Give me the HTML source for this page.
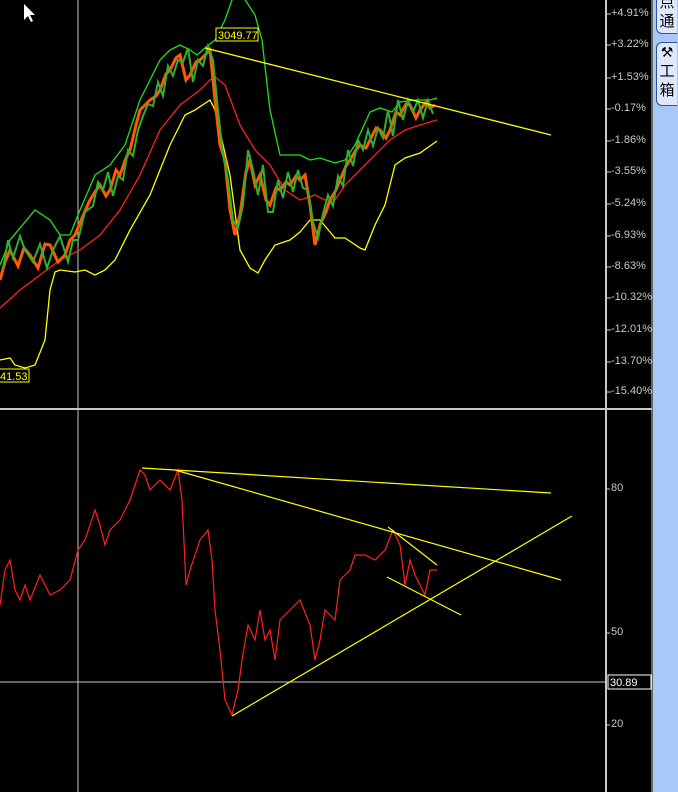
<!DOCTYPE html>
<html><head><meta charset="utf-8"><style>
body{margin:0;width:678px;height:792px;background:#000;overflow:hidden;font-family:"Liberation Sans","Noto Sans CJK SC",sans-serif}
.ax{position:absolute;color:#c8c8c8;font-size:11px;left:611px}
.tab{position:absolute;left:656px;width:20px;background:#dde8fc;border:1px solid #3050a0;border-right:none;border-radius:6px 0 0 6px;font-size:15px;line-height:19px;text-align:center;color:#000}
</style></head><body>
<svg width="678" height="792" style="position:absolute;left:0;top:0" xmlns="http://www.w3.org/2000/svg">
<rect x="653" y="0" width="25" height="792" fill="#a8c8f8"/>
<line x1="78" y1="0" x2="78" y2="792" stroke="#c8c8c8" stroke-width="1"/>
<line x1="0" y1="682" x2="606" y2="682" stroke="#c8c8c8" stroke-width="1"/>
<line x1="0" y1="409" x2="652" y2="409" stroke="#c8c8c8" stroke-width="2"/>
<line x1="606" y1="0" x2="606" y2="792" stroke="#c8c8c8" stroke-width="2"/>
<line x1="652" y1="0" x2="652" y2="792" stroke="#c8c8c8" stroke-width="1"/>
<g stroke="#c8c8c8">
<line x1="607" y1="14" x2="611" y2="14"/><line x1="607" y1="45" x2="611" y2="45"/><line x1="607" y1="78" x2="611" y2="78"/><line x1="607" y1="109" x2="611" y2="109"/><line x1="607" y1="141" x2="611" y2="141"/><line x1="607" y1="172" x2="611" y2="172"/><line x1="607" y1="204" x2="611" y2="204"/><line x1="607" y1="236" x2="611" y2="236"/><line x1="607" y1="267" x2="611" y2="267"/><line x1="607" y1="298" x2="611" y2="298"/><line x1="607" y1="330" x2="611" y2="330"/><line x1="607" y1="362" x2="611" y2="362"/><line x1="607" y1="392" x2="611" y2="392"/>
<line x1="607" y1="489" x2="610" y2="489"/><line x1="607" y1="633" x2="610" y2="633"/><line x1="607" y1="725" x2="610" y2="725"/>
</g>
<polyline fill="none" stroke="#ffff00" stroke-width="1.3" points="0,360 10,358 15,365 25,368 35,365 45,340 50,290 55,272 60,270 75,272 85,270 95,275 105,270 115,260 130,230 150,195 170,145 185,115 195,110 210,100 215,110 230,175 240,250 250,268 258,273 265,260 275,245 290,240 300,232 310,220 320,220 335,238 345,238 360,248 365,250 375,225 385,205 395,165 405,158 420,153 437,141"/>
<polyline fill="none" stroke="#ff2020" stroke-width="1.3" points="0,308 20,290 40,275 60,260 80,250 100,235 120,210 140,175 160,130 180,105 200,90 210,80 215,77 225,85 240,125 255,150 270,165 285,190 300,200 315,195 325,200 335,200 345,185 360,170 375,155 390,140 405,130 420,125 437,120"/>
<polyline fill="none" stroke="#20e020" stroke-width="1.3" points="0,265 10,240 35,210 50,220 60,235 70,235 80,210 95,175 110,165 125,145 140,100 150,80 160,60 170,50 180,45 190,50 197,55 205,48 215,40 225,20 232,0 240,-8 255,15 262,40 270,110 280,155 290,155 300,155 310,160 320,158 335,163 345,160 355,145 370,112 380,108 392,112 400,102 415,100 430,100 437,98"/>
<polyline fill="none" stroke="#ff5a00" stroke-width="3" points="0,280 5,262 10,250 18,266 24,248 30,255 38,268 45,244 50,245 58,262 65,255 70,240 75,235 82,218 90,200 95,192 100,185 106,196 110,190 116,170 120,175 126,158 130,150 136,125 140,110 146,104 150,100 156,96 160,90 166,74 170,70 176,58 180,55 186,80 190,75 196,62 200,60 206,54 210,50 215,100 220,145 225,160 230,210 235,235 240,215 246,172 250,160 255,185 260,175 266,200 270,205 276,188 280,190 286,182 290,185 296,176 300,180 305,175 310,205 315,245 320,225 326,212 330,200 336,190 340,180 346,166 350,160 356,150 360,145 366,148 370,140 376,128 380,130 386,138 390,130 396,112 400,115 406,104 410,105 416,118 420,110 426,102 430,108 435,105"/>
<polyline fill="none" stroke="#30b030" stroke-width="2" points="3,270 8,240 13,258 20,236 25,250 33,262 40,244 47,268 53,250 60,236 68,262 73,240 78,240 85,212 93,206 98,182 103,190 108,172 113,196 118,176 123,180 128,150 133,156 138,130 143,116 148,104 153,106 158,82 163,96 168,66 173,76 178,60 183,62 188,48 193,82 198,60 203,66 208,46 213,60 218,110 223,155 228,180 233,220 238,228 243,205 248,150 253,170 258,195 263,165 268,212 273,212 278,180 283,198 288,172 293,192 298,170 303,188 308,190 313,222 318,238 323,214 328,195 333,206 338,176 343,186 348,150 353,166 358,140 363,150 368,130 373,146 378,128 383,138 388,110 393,136 398,100 403,120 408,100 413,112 418,100 423,118 428,100 433,114"/>
<line x1="205" y1="48" x2="551" y2="135" stroke="#ffff00" stroke-width="1.3"/>
<rect x="216" y="28" width="42" height="13" fill="#000" stroke="#ffff00"/>
<text x="218" y="39" fill="#ffff00" font-size="11" font-family="Liberation Sans">3049.77</text>
<rect x="-2" y="369" width="31" height="13" fill="#000" stroke="#ffff00"/>
<text x="0" y="380" fill="#ffff00" font-size="11" font-family="Liberation Sans">41.53</text>
<polygon points="24,4 24,20 28,16 31,22 33,21 30,15 35,15" fill="#fff"/>
<polyline fill="none" stroke="#ff2020" stroke-width="1.2" points="0,605 5,570 10,560 15,590 20,600 25,585 30,600 40,575 50,595 60,590 70,580 78,550 85,540 95,510 100,525 105,545 110,530 120,520 130,500 140,470 145,475 150,490 160,480 170,490 178,470 182,500 186,585 190,570 200,540 208,530 212,560 215,610 220,650 225,700 232,715 238,690 242,660 248,625 255,640 260,610 265,640 270,630 275,660 280,620 290,610 300,600 310,625 315,660 320,640 325,610 335,620 340,580 350,570 355,555 365,555 375,560 385,550 393,530 400,545 405,585 410,560 415,575 420,585 425,595 430,570 437,570"/>
<g stroke="#ffff00" stroke-width="1.2">
<line x1="142" y1="468" x2="551" y2="493"/>
<line x1="175" y1="470" x2="561" y2="580"/>
<line x1="232" y1="716" x2="572" y2="516"/>
<line x1="388" y1="527" x2="437" y2="565"/>
<line x1="387" y1="577" x2="461" y2="615"/>
</g>
<rect x="608" y="675" width="43" height="14" fill="#000" stroke="#fff"/>
<text x="610" y="686" fill="#fff" font-size="11" font-family="Liberation Sans">30.89</text>
</svg>
<div class="ax" style="top:7px">+4.91%</div><div class="ax" style="top:38px">+3.22%</div><div class="ax" style="top:71px">+1.53%</div><div class="ax" style="top:102px">-0.17%</div><div class="ax" style="top:134px">-1.86%</div><div class="ax" style="top:165px">-3.55%</div><div class="ax" style="top:197px">-5.24%</div><div class="ax" style="top:229px">-6.93%</div><div class="ax" style="top:260px">-8.63%</div><div class="ax" style="top:291px">-10.32%</div><div class="ax" style="top:323px">-12.01%</div><div class="ax" style="top:355px">-13.70%</div><div class="ax" style="top:385px">-15.40%</div>
<div class="ax" style="top:482px">80</div><div class="ax" style="top:626px">50</div><div class="ax" style="top:718px">20</div>
<div class="tab" style="top:-8px;height:40px">点<br>通</div>
<div class="tab" style="top:42px;height:62px"><span style="font-size:14px">⚒</span><br>工<br>箱</div>
</body></html>
